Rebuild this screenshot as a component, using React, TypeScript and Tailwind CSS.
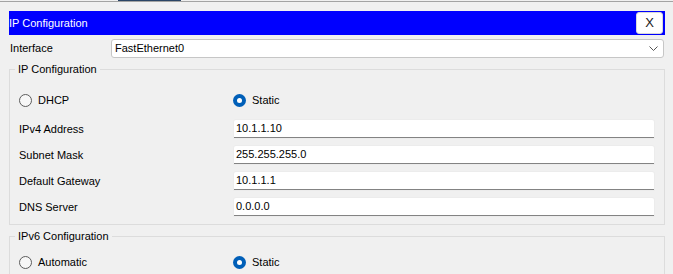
import React from "react";

function Radio({ checked, label }: { checked?: boolean; label: string }) {
  return (
    <div className="flex items-center h-[20px]">
      {checked ? (
        <span className="w-[13px] h-[13px] rounded-full bg-[#005fb8] flex items-center justify-center">
          <span className="w-[5px] h-[5px] rounded-full bg-white" />
        </span>
      ) : (
        <span className="w-[13px] h-[13px] rounded-full border border-[#5c5c5c] bg-[#f7f7f7]" />
      )}
      <span className="ml-[6px]">{label}</span>
    </div>
  );
}

function Field({ label, value }: { label: string; value: string }) {
  return (
    <div className="flex items-center h-[18px]">
      <div className="w-[215px] shrink-0">{label}</div>
      <div className="w-[420px] h-[18px] bg-white border-b border-[#838383] rounded-t-[2px] shadow-[0_0_0_1px_#ececec] flex items-center pl-[2px]">
        {value}
      </div>
    </div>
  );
}

export default function App() {
  return (
    <div
      className="w-[673px] h-[274px] bg-[#f0f0f0] overflow-hidden text-[11px] text-black"
      style={{ fontFamily: '"Liberation Sans", Arial, sans-serif' }}
    >
      <div className="h-px flex">
        <div className="ml-[118px] w-[63px] bg-[#2a4466]" />
      </div>
      <div className="h-px bg-[#a3a3a3]" />

      <div className="mt-[9px] ml-[9px] w-[656px] h-[24px] bg-[#0000ff] flex items-center justify-between">
        <span className="text-white">IP Configuration</span>
        <button className="mr-[2px] w-[27px] h-[22px] bg-white rounded-[3px] border border-[#d9d9d9] flex items-center justify-center text-[13px] text-[#1a1a1a]">
          X
        </button>
      </div>

      <div className="mt-[4px] flex items-center h-[19px]">
        <span className="ml-[10px] w-[101px]">Interface</span>
        <div className="w-[553px] h-[19px] bg-white border border-[#c6c6c6] rounded-[3px] flex items-center justify-between pl-[3px] pr-[5px]">
          <span>FastEthernet0</span>
          <svg width="9" height="5" viewBox="0 0 9 5" fill="none">
            <path d="M0.5 0.5 L4.5 4.5 L8.5 0.5" stroke="#555" strokeWidth="1" />
          </svg>
        </div>
      </div>

      <fieldset className="mt-[4px] ml-[9px] w-[656px] border border-[#dcdcdc] pl-[9px] pr-[10px] pt-[14px] pb-[8px]">
        <legend className="-ml-[4px] px-[3px] leading-[14px]">IP Configuration</legend>
        <div className="flex">
          <div className="w-[214px]">
            <Radio label="DHCP" />
          </div>
          <Radio checked label="Static" />
        </div>
        <div className="mt-[10px] flex flex-col gap-[8px]">
          <Field label="IPv4 Address" value="10.1.1.10" />
          <Field label="Subnet Mask" value="255.255.255.0" />
          <Field label="Default Gateway" value="10.1.1.1" />
          <Field label="DNS Server" value="0.0.0.0" />
        </div>
      </fieldset>

      <fieldset className="mt-[4px] ml-[9px] w-[656px] border border-[#dcdcdc] pl-[9px] pr-[10px] pt-[9px] pb-[8px]">
        <legend className="-ml-[4px] px-[3px] leading-[14px]">IPv6 Configuration</legend>
        <div className="flex">
          <div className="w-[214px]">
            <Radio label="Automatic" />
          </div>
          <Radio checked label="Static" />
        </div>
      </fieldset>
    </div>
  );
}
